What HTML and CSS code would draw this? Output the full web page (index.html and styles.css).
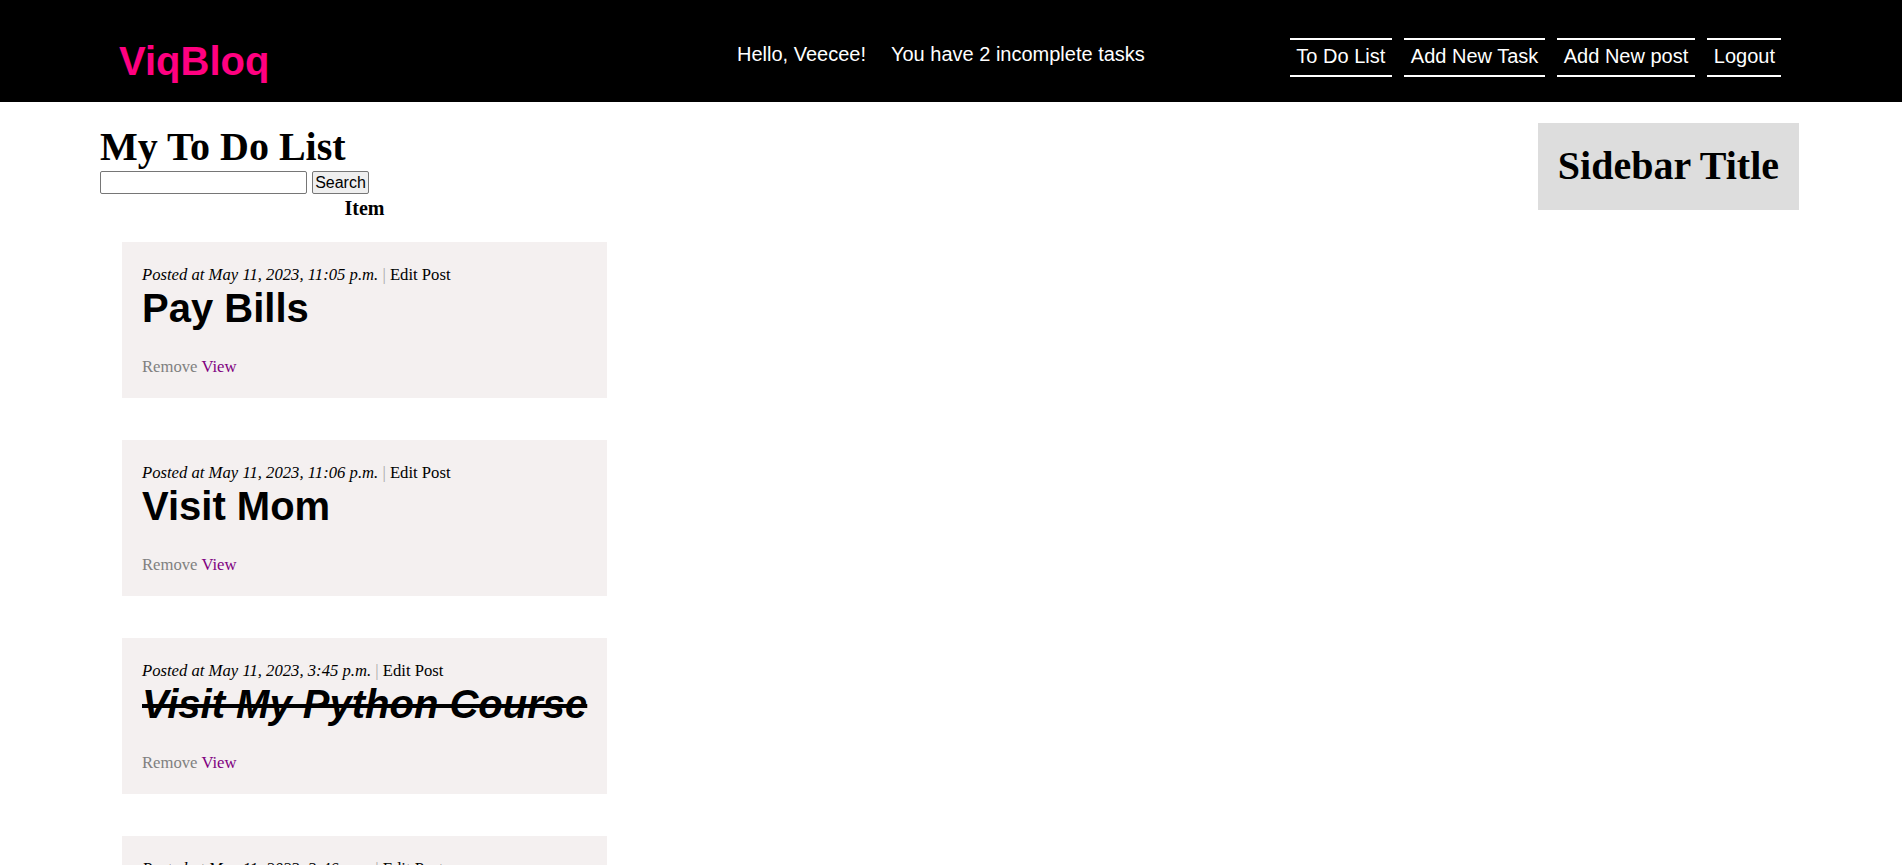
FILE: index.html
```html
<!DOCTYPE html>
<html lang="en">
<head>
<meta charset="utf-8">
<title>ViqBloq - My To Do List</title>
<link rel="stylesheet" href="styles.css">
</head>
<body>
<header class="topbar">
  <a class="brand" href="#">ViqBloq</a>
  <div class="greeting">
    <span class="hello">Hello, Veecee!</span>
    <span class="count">You have 2 incomplete tasks</span>
  </div>
  <nav class="menu">
    <a href="#" class="menu-link">To Do List</a>
    <a href="#" class="menu-link">Add New Task</a>
    <a href="#" class="menu-link">Add New post</a>
    <a href="#" class="menu-link">Logout</a>
  </nav>
</header>

<main class="page">
  <section class="content">
    <h1 class="page-title">My To Do List</h1>
    <form class="search" action="#">
      <input type="text" class="search-input" name="q">
      <button type="submit" class="search-btn">Search</button>
    </form>
    <div class="list">
      <div class="list-head">Item</div>
      <div class="cards">
        <article class="card">
          <div class="meta"><em>Posted at May 11, 2023, 11:05 p.m.</em> <span class="sep">|</span> <a href="#" class="edit">Edit Post</a></div>
          <h2 class="card-title">Pay Bills</h2>
          <div class="actions"><a href="#" class="remove">Remove</a> <a href="#" class="view">View</a></div>
        </article>
        <article class="card">
          <div class="meta"><em>Posted at May 11, 2023, 11:06 p.m.</em> <span class="sep">|</span> <a href="#" class="edit">Edit Post</a></div>
          <h2 class="card-title">Visit Mom</h2>
          <div class="actions"><a href="#" class="remove">Remove</a> <a href="#" class="view">View</a></div>
        </article>
        <article class="card">
          <div class="meta"><em>Posted at May 11, 2023, 3:45 p.m.</em> <span class="sep">|</span> <a href="#" class="edit">Edit Post</a></div>
          <h2 class="card-title done">Visit My Python Course</h2>
          <div class="actions"><a href="#" class="remove">Remove</a> <a href="#" class="view">View</a></div>
        </article>
        <article class="card">
          <div class="meta"><em>Posted at May 11, 2023, 3:46 p.m.</em> <span class="sep">|</span> <a href="#" class="edit">Edit Post</a></div>
          <h2 class="card-title done">Buy Groceries</h2>
          <div class="actions"><a href="#" class="remove">Remove</a> <a href="#" class="view">View</a></div>
        </article>
        <article class="card">
          <div class="meta"><em>Posted at May 11, 2023, 3:47 p.m.</em> <span class="sep">|</span> <a href="#" class="edit">Edit Post</a></div>
          <h2 class="card-title done">Clean The House</h2>
          <div class="actions"><a href="#" class="remove">Remove</a> <a href="#" class="view">View</a></div>
        </article>
        <article class="card">
          <div class="meta"><em>Posted at May 11, 2023, 3:48 p.m.</em> <span class="sep">|</span> <a href="#" class="edit">Edit Post</a></div>
          <h2 class="card-title done">Read A Book</h2>
          <div class="actions"><a href="#" class="remove">Remove</a> <a href="#" class="view">View</a></div>
        </article>
        <article class="card">
          <div class="meta"><em>Posted at May 11, 2023, 3:49 p.m.</em> <span class="sep">|</span> <a href="#" class="edit">Edit Post</a></div>
          <h2 class="card-title done">Go To The Gym</h2>
          <div class="actions"><a href="#" class="remove">Remove</a> <a href="#" class="view">View</a></div>
        </article>
        <article class="card">
          <div class="meta"><em>Posted at May 11, 2023, 3:50 p.m.</em> <span class="sep">|</span> <a href="#" class="edit">Edit Post</a></div>
          <h2 class="card-title done">Call The Bank</h2>
          <div class="actions"><a href="#" class="remove">Remove</a> <a href="#" class="view">View</a></div>
        </article>
      </div>
    </div>
  </section>

  <aside class="sidebar">
    <h1 class="sidebar-title">Sidebar Title</h1>
  </aside>
</main>
</body>
</html>
```

FILE: styles.css
```css
body {
  margin: 0;
  font-family: "Liberation Serif", "Times New Roman", serif;
  color: #000;
  background: #fff;
}

/* ---------- header ---------- */
.topbar {
  display: flex;
  align-items: flex-start;
  height: 102px;
  box-sizing: border-box;
  padding: 38px 0 0 119px;
  background: #000;
  font-family: "Liberation Sans", Arial, sans-serif;
}

.brand {
  flex: 0 0 618px;
  font-size: 40px;
  font-weight: bold;
  line-height: 46px;
  color: #ff0080;
  text-decoration: none;
}

.greeting {
  display: flex;
  gap: 25px;
  margin-top: 5px;
  font-size: 20px;
  line-height: 23px;
  color: #fff;
  white-space: nowrap;
}

.menu {
  display: flex;
  gap: 12.5px;
  margin-left: 145px;
}

.menu-link {
  font-size: 20px;
  line-height: 23px;
  color: #fff;
  text-decoration: none;
  padding: 5px 6.5px 7px;
  border-top: 2px solid #fff;
  border-bottom: 2px solid #fff;
  white-space: nowrap;
}

/* ---------- page ---------- */
.page {
  display: flex;
  justify-content: space-between;
  align-items: flex-start;
  padding: 21px 103px 0 100px;
}

.page-title {
  margin: 1px 0 0;
  font-size: 40px;
  line-height: 46px;
  font-weight: bold;
}

.search {
  display: flex;
  gap: 5px;
  margin: 1px 0 0;
}

.search-input {
  width: 207px;
  height: 23px;
  box-sizing: border-box;
  margin: 0;
  padding: 1px 2px;
  border: 1px solid #767676;
  border-radius: 2px;
  font: 16px "Liberation Sans", Arial, sans-serif;
  background: #fff;
}

.search-btn {
  width: 57px;
  height: 23px;
  box-sizing: border-box;
  margin: 0;
  padding: 0;
  border: 1px solid #767676;
  border-radius: 2px;
  background: #efefef;
  color: #000;
  font: 16px "Liberation Sans", Arial, sans-serif;
}

.list {
  width: 529px;
}

.list-head {
  margin-top: 3px;
  text-align: center;
  font-weight: bold;
  font-size: 20px;
  line-height: 23px;
}

.cards {
  display: flex;
  flex-direction: column;
  gap: 42px;
  padding: 22px 22px 0;
}

.card {
  background: #f4f0f0;
  padding: 23px 20px 22px;
}

.meta {
  font-size: 16.67px;
  line-height: 19px;
  white-space: nowrap;
}

.sep {
  color: #a9a9a9;
}

.edit {
  color: #000;
  text-decoration: none;
}

.card-title {
  margin: 1px 0 0;
  font-family: "Liberation Sans", Arial, sans-serif;
  font-size: 40px;
  line-height: 46px;
  font-weight: bold;
  white-space: nowrap;
}

.card-title.done {
  font-style: italic;
  text-decoration: line-through;
}

.actions {
  margin-top: 26px;
  font-size: 16.67px;
  line-height: 19px;
}

.remove {
  color: #808080;
  text-decoration: none;
}

.view {
  color: #800080;
  text-decoration: none;
}

/* ---------- sidebar ---------- */
.sidebar {
  background: #ddd;
  padding: 20px 20px 21px;
}

.sidebar-title {
  margin: 0;
  font-size: 40px;
  line-height: 46px;
  font-weight: bold;
  white-space: nowrap;
}
```
